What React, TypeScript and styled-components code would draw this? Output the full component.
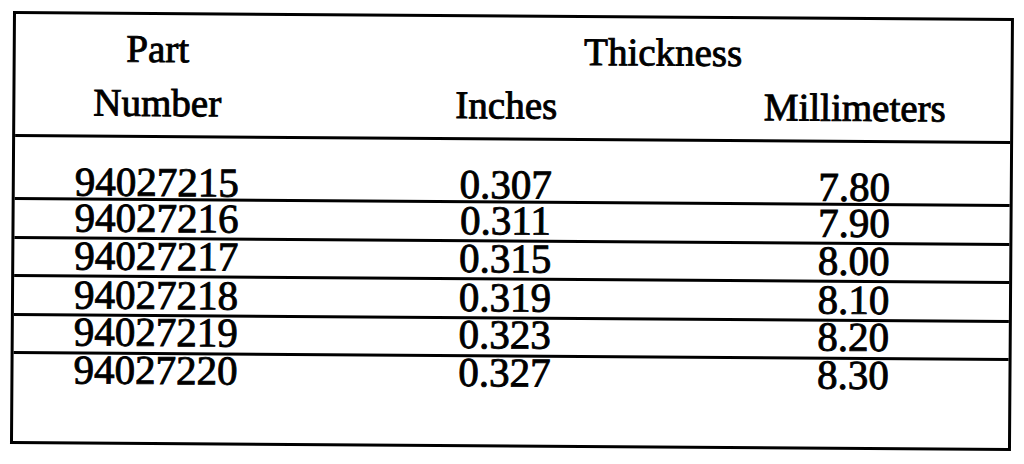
import React from "react";
import styled, { createGlobalStyle } from "styled-components";

const GlobalStyle = createGlobalStyle`
  html, body {
    margin: 0;
    padding: 0;
    background: #fff;
  }
  body {
    font-family: "Liberation Serif", "Times New Roman", serif;
    color: #000;
  }
`;

const Page = styled.div`
  width: 1024px;
  height: 464px;
  padding: 11px 0 0 13px;
  box-sizing: border-box;
  overflow: hidden;
`;

// scanned sheet sits a little crooked
const Sheet = styled.div`
  width: 1001px;
  border: 3px solid #000;
  box-sizing: border-box;
  transform: rotate(0.4deg);
  transform-origin: top left;
  -webkit-text-stroke: 0.9px #000;
`;

const Head = styled.div`
  display: grid;
  grid-template-columns: 284px 414px 1fr;
  height: 123px;
  padding-top: 12px;
  box-sizing: border-box;
  border-bottom: 3px solid #000;
  font-size: 39px;
  line-height: 44px;
`;

const HeadCell = styled.div<{ $span?: number; $shift?: number }>`
  grid-column: span ${(p) => p.$span ?? 1};
  text-align: center;
  padding-left: ${(p) => (p.$shift && p.$shift > 0 ? p.$shift : 0)}px;
  padding-right: ${(p) => (p.$shift && p.$shift < 0 ? -p.$shift : 0)}px;
`;

const Row = styled.div<{ $height: number; $padTop: number; $first?: boolean }>`
  display: grid;
  grid-template-columns: 284px 414px 1fr;
  align-items: start;
  height: ${(p) => p.$height}px;
  padding-top: ${(p) => p.$padTop}px;
  box-sizing: border-box;
  border-top: ${(p) => (p.$first ? "none" : "3px solid #000")};
  font-size: 41px;
  line-height: 30px;
`;

const Cell = styled.div<{ $shift?: number }>`
  text-align: center;
  padding-right: ${(p) => p.$shift ?? 0}px;
`;

const rows = [
  { part: "94027215", inches: "0.307", mm: "7.80", height: 60, padTop: 29 },
  { part: "94027216", inches: "0.311", mm: "7.90", height: 39, padTop: 2 },
  { part: "94027217", inches: "0.315", mm: "8.00", height: 38, padTop: 1 },
  { part: "94027218", inches: "0.319", mm: "8.10", height: 39, padTop: 2 },
  { part: "94027219", inches: "0.323", mm: "8.20", height: 38, padTop: 0 },
  { part: "94027220", inches: "0.327", mm: "8.30", height: 90, padTop: 0 },
];

const App = () => {
  return (
    <>
      <GlobalStyle />
      <Page>
        <Sheet>
          <Head>
            <HeadCell>Part</HeadCell>
            <HeadCell $span={2} $shift={16}>
              Thickness
            </HeadCell>
            <HeadCell>Number</HeadCell>
            <HeadCell>Inches</HeadCell>
            <HeadCell $shift={-14}>Millimeters</HeadCell>
          </Head>
          {rows.map((r, i) => (
            <Row key={r.part} $height={r.height} $padTop={r.padTop} $first={i === 0}>
              <Cell>{r.part}</Cell>
              <Cell>{r.inches}</Cell>
              <Cell $shift={14}>{r.mm}</Cell>
            </Row>
          ))}
        </Sheet>
      </Page>
    </>
  );
};

export default App;
